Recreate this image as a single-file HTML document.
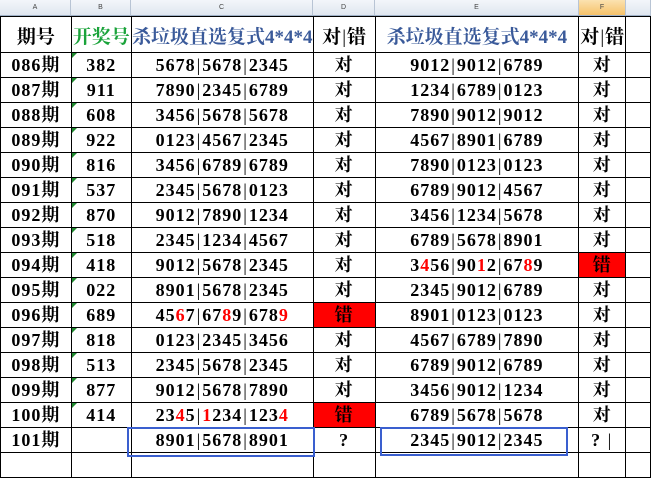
<!DOCTYPE html>
<html><head><meta charset="utf-8"><style>
body{margin:0;width:651px;height:459px;overflow:hidden;background:#fff;position:relative;font-family:"Liberation Serif","Noto Serif CJK SC",serif;}
.hd{position:absolute;top:0;height:16px;background:linear-gradient(#f3f6fa,#dfe6ef);border-right:1px solid #b8c4d4;border-bottom:1px solid #9eb0c6;box-sizing:border-box;font:7px "Liberation Sans",sans-serif;color:#444;text-align:center;line-height:16px;}
table{position:absolute;left:0;top:16px;border-collapse:collapse;table-layout:fixed;}
td{border:1px solid #000;height:24px;padding:0;text-align:center;font-weight:bold;font-size:18px;letter-spacing:1px;white-space:nowrap;overflow:hidden;position:relative;line-height:24px;}
tr.t td{height:35px;vertical-align:bottom;line-height:28px;font-size:19px;letter-spacing:0;}
.g{color:#1aa33a;}
.b{color:#3a5a9a;}
.r{color:#f00;}
.rb{background:#f00;}
.tri:before{content:"";position:absolute;left:0;top:0;border-top:5px solid #1f8a2f;border-right:5px solid transparent;}
.box{position:absolute;border:2px solid #3a5fcf;}
i{font-style:normal;font-weight:normal;margin:0 1px;}
</style></head><body>
<div class="hd" style="left:0;width:71px">A</div>
<div class="hd" style="left:71px;width:60px">B</div>
<div class="hd" style="left:131px;width:182px">C</div>
<div class="hd" style="left:313px;width:62px">D</div>
<div class="hd" style="left:375px;width:204px">E</div>
<div class="hd" style="left:579px;width:47px;background:linear-gradient(#fbe2b0,#f6c26a);">F</div>
<div class="hd" style="left:626px;width:25px"></div>
<table>
<colgroup><col style="width:71px"><col style="width:60px"><col style="width:182px"><col style="width:62px"><col style="width:204px"><col style="width:47px"><col style="width:25px"></colgroup>
<tr class="t"><td>期号</td><td class="g">开奖号</td><td class="b">杀垃圾直选复式4*4*4</td><td>对<i>|</i>错</td><td class="b">杀垃圾直选复式4*4*4</td><td>对<i>|</i>错</td><td></td></tr>
<tr><td>086期</td><td class="tri">382</td><td>5678<i>|</i>5678<i>|</i>2345</td><td>对</td><td>9012<i>|</i>9012<i>|</i>6789</td><td>对</td><td></td></tr>
<tr><td>087期</td><td class="tri">911</td><td>7890<i>|</i>2345<i>|</i>6789</td><td>对</td><td>1234<i>|</i>6789<i>|</i>0123</td><td>对</td><td></td></tr>
<tr><td>088期</td><td class="tri">608</td><td>3456<i>|</i>5678<i>|</i>5678</td><td>对</td><td>7890<i>|</i>9012<i>|</i>9012</td><td>对</td><td></td></tr>
<tr><td>089期</td><td class="tri">922</td><td>0123<i>|</i>4567<i>|</i>2345</td><td>对</td><td>4567<i>|</i>8901<i>|</i>6789</td><td>对</td><td></td></tr>
<tr><td>090期</td><td class="tri">816</td><td>3456<i>|</i>6789<i>|</i>6789</td><td>对</td><td>7890<i>|</i>0123<i>|</i>0123</td><td>对</td><td></td></tr>
<tr><td>091期</td><td class="tri">537</td><td>2345<i>|</i>5678<i>|</i>0123</td><td>对</td><td>6789<i>|</i>9012<i>|</i>4567</td><td>对</td><td></td></tr>
<tr><td>092期</td><td class="tri">870</td><td>9012<i>|</i>7890<i>|</i>1234</td><td>对</td><td>3456<i>|</i>1234<i>|</i>5678</td><td>对</td><td></td></tr>
<tr><td>093期</td><td class="tri">518</td><td>2345<i>|</i>1234<i>|</i>4567</td><td>对</td><td>6789<i>|</i>5678<i>|</i>8901</td><td>对</td><td></td></tr>
<tr><td>094期</td><td class="tri">418</td><td>9012<i>|</i>5678<i>|</i>2345</td><td>对</td><td>3<span class="r">4</span>56<i>|</i>90<span class="r">1</span>2<i>|</i>67<span class="r">8</span>9</td><td class="rb">错</td><td></td></tr>
<tr><td>095期</td><td class="tri">022</td><td>8901<i>|</i>5678<i>|</i>2345</td><td>对</td><td>2345<i>|</i>9012<i>|</i>6789</td><td>对</td><td></td></tr>
<tr><td>096期</td><td class="tri">689</td><td>45<span class="r">6</span>7<i>|</i>67<span class="r">8</span>9<i>|</i>678<span class="r">9</span></td><td class="rb">错</td><td>8901<i>|</i>0123<i>|</i>0123</td><td>对</td><td></td></tr>
<tr><td>097期</td><td class="tri">818</td><td>0123<i>|</i>2345<i>|</i>3456</td><td>对</td><td>4567<i>|</i>6789<i>|</i>7890</td><td>对</td><td></td></tr>
<tr><td>098期</td><td class="tri">513</td><td>2345<i>|</i>5678<i>|</i>2345</td><td>对</td><td>6789<i>|</i>9012<i>|</i>6789</td><td>对</td><td></td></tr>
<tr><td>099期</td><td class="tri">877</td><td>9012<i>|</i>5678<i>|</i>7890</td><td>对</td><td>3456<i>|</i>9012<i>|</i>1234</td><td>对</td><td></td></tr>
<tr><td>100期</td><td class="tri">414</td><td>23<span class="r">4</span>5<i>|</i><span class="r">1</span>234<i>|</i>123<span class="r">4</span></td><td class="rb">错</td><td>6789<i>|</i>5678<i>|</i>5678</td><td>对</td><td></td></tr>
<tr><td>101期</td><td></td><td>8901<i>|</i>5678<i>|</i>8901</td><td>?</td><td>2345<i>|</i>9012<i>|</i>2345</td><td>?&nbsp;<i>|</i></td><td></td></tr>
<tr><td></td><td></td><td></td><td></td><td></td><td></td><td></td></tr>
</table>
<div class="box" style="left:127px;top:427px;width:184px;height:26px"></div>
<div class="box" style="left:380px;top:427px;width:184px;height:25px"></div>
</body></html>
